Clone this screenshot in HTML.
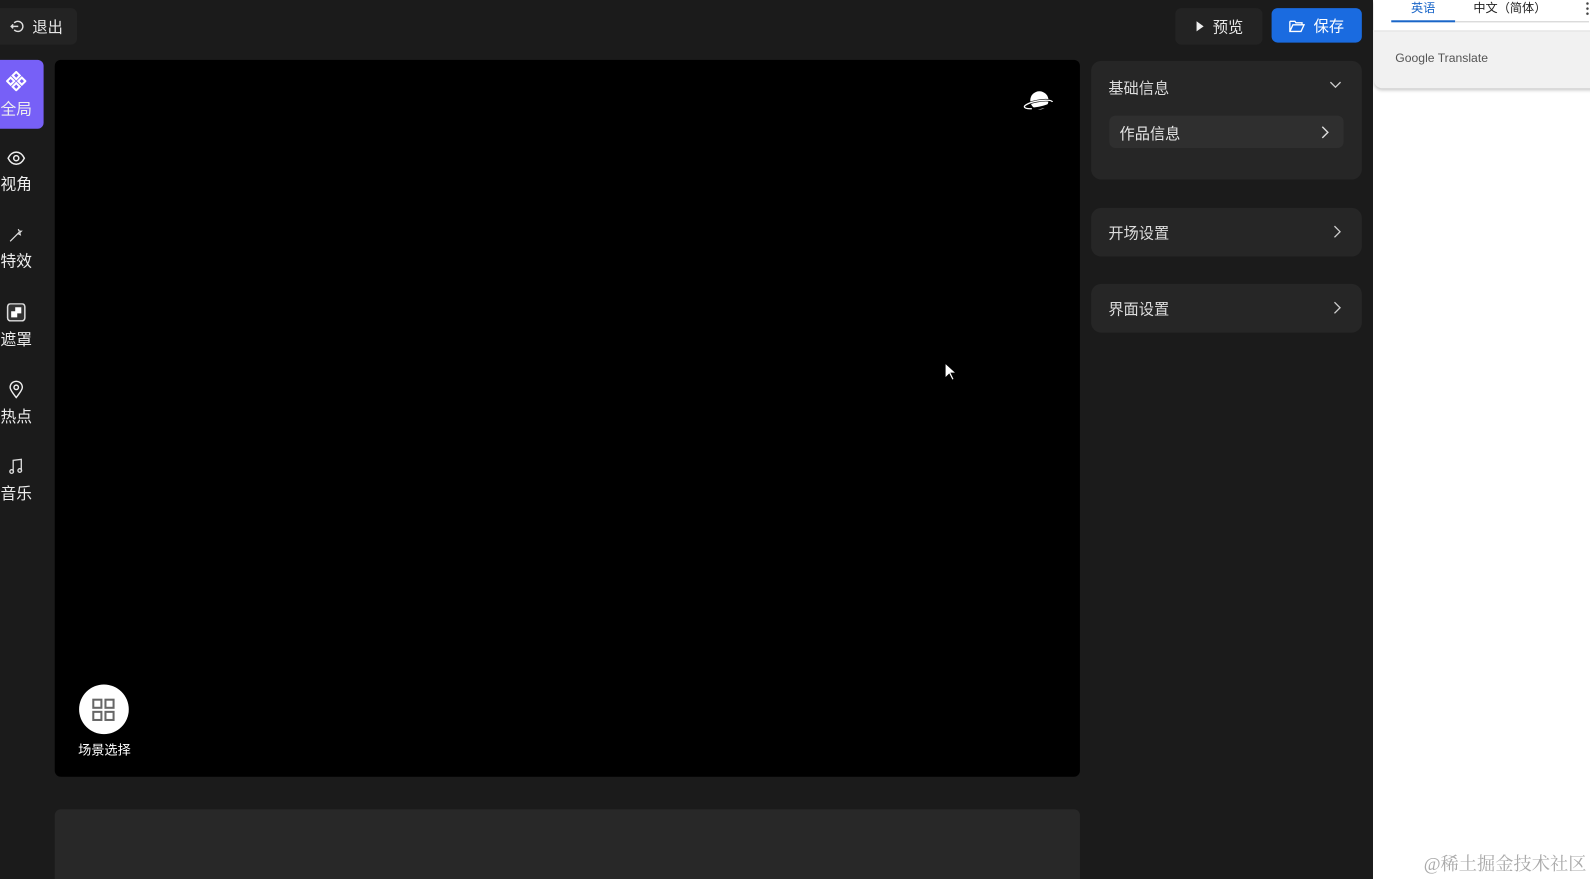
<!DOCTYPE html>
<html><head><meta charset="utf-8"><style>
*{margin:0;padding:0;box-sizing:border-box}
html,body{width:1590px;height:879px;overflow:hidden;background:#1b1b1b}
#w{width:1568px;height:867px;position:relative;transform:scale(1.01403);transform-origin:0 0;font-family:"Liberation Sans","Noto Sans CJK SC",sans-serif;color:#e8e8e8}
.a{position:absolute}
.btn{background:#232323;border-radius:6px;font-size:15px;display:flex;align-items:center;justify-content:center;gap:8px}
.side{position:absolute;left:0;width:32px;text-align:center;font-size:15.5px;color:#eee;line-height:18px}
.side svg{display:block;margin:0 auto 10px}
.card{position:absolute;left:1076px;width:267px;background:#262626;border-radius:10px;font-size:15px;color:#ddd}
.card .t{position:absolute;left:17px}
.chev{position:absolute;right:20px}
</style></head><body><div id="w">
<div class="a btn" style="left:-8px;top:8px;width:84px;height:36px;padding-left:4px">
<svg width="14" height="14" viewBox="0 0 14 14" fill="none" stroke="#ddd" stroke-width="1.4"><path d="M4 3.5A5 5 0 1 1 4 10.5"/><path d="M1 7h7M3 5L1 7l2 2"/></svg>退出</div>
<div class="a btn" style="left:1159px;top:8px;width:86px;height:36px"><svg width="10" height="12"><path d="M2 1l7 5-7 5z" fill="#eee"/></svg>预览</div>
<div class="a btn" style="left:1254px;top:8px;width:89px;height:34px;background:#1a6be0;color:#fff"><svg width="16" height="13" viewBox="0 0 16 13" fill="none" stroke="#fff" stroke-width="1.3"><path d="M1 2h5l1 1.5h6v2M1 2v10h11l3-6.5H4L1 12"/></svg>保存</div>

<div class="a" style="left:0;top:59px;width:43px;height:68px;background:#7760f7;border-radius:0 6px 6px 0"></div>
<div class="side" style="top:70px"><svg width="20" height="20" viewBox="0 0 20 20" fill="none" stroke="#fff" stroke-width="2"><rect x="7.5" y="2" width="5" height="5" transform="rotate(45 10 4.5)"/><rect x="2" y="7.5" width="5" height="5" transform="rotate(45 4.5 10)"/><rect x="13" y="7.5" width="5" height="5" transform="rotate(45 15.5 10)"/><rect x="7.5" y="13" width="5" height="5" transform="rotate(45 10 15.5)"/></svg>全局</div>
<div class="side" style="top:148px"><svg width="18" height="16" viewBox="0 0 18 16" fill="none" stroke="#eee" stroke-width="1.5"><path d="M1 8c2-4 5-6 8-6s6 2 8 6c-2 4-5 6-8 6S3 12 1 8z"/><circle cx="9" cy="8" r="2.5"/></svg>视角</div>
<div class="side" style="top:224px"><svg width="18" height="16" viewBox="0 0 18 16" fill="none" stroke="#ddd" stroke-width="1.2"><path d="M3 14L12 5M11 2l1 2 2 0-1.5 1.5.5 2-2-1"/></svg>特效</div>
<div class="side" style="top:299px"><svg width="20" height="18" viewBox="0 0 20 18" fill="none"><rect x="1.5" y="0.5" width="17" height="17" rx="3" stroke="#ddd" stroke-width="1.5" fill="#333"/><path d="M9 4h6v6H9zM5 8h6v6H5z" fill="#fff"/></svg>遮罩</div>
<div class="side" style="top:375px"><svg width="16" height="18" viewBox="0 0 16 18" fill="none" stroke="#eee" stroke-width="1.4"><path d="M8 17C4 12 2 9 2 7a6 6 0 0 1 12 0c0 2-2 5-6 10z"/><circle cx="8" cy="7" r="2.2"/></svg>热点</div>
<div class="side" style="top:451px"><svg width="16" height="18" viewBox="0 0 16 18" fill="none" stroke="#ddd" stroke-width="1.3"><path d="M5 14V3l8-1v11"/><circle cx="3.5" cy="14" r="1.8"/><circle cx="11.5" cy="13" r="1.8"/></svg>音乐</div>

<div class="a" style="left:54px;top:59px;width:1011px;height:707px;background:#000;border-radius:6px"></div>
<svg class="a" style="left:1008px;top:87px" width="32" height="26" viewBox="0 0 32 26"><circle cx="17" cy="12" r="9" fill="#fff"/><ellipse cx="16" cy="16" rx="14" ry="3.5" transform="rotate(-10 16 16)" fill="none" stroke="#000" stroke-width="2.5"/><ellipse cx="16" cy="16" rx="14" ry="3.5" transform="rotate(-10 16 16)" fill="none" stroke="#fff" stroke-width="1.3" stroke-dasharray="0 22 40"/></svg>
<div class="a" style="left:78px;top:675px;width:49px;height:49px;border-radius:50%;background:#fff"></div>
<svg class="a" style="left:90px;top:688px" width="24" height="24" viewBox="0 0 24 24" fill="none" stroke="#666" stroke-width="2"><rect x="2" y="2" width="8" height="8"/><rect x="14" y="2" width="8" height="8"/><rect x="2" y="14" width="8" height="8"/><rect x="14" y="14" width="8" height="8"/></svg>
<div class="a" style="left:72px;top:729px;width:62px;text-align:center;font-size:13px;color:#fff">场景选择</div>
<svg class="a" style="left:930px;top:357px" width="14" height="20"><path d="M2 1v15l4-4 3 6 2-1-3-6h5z" fill="#fff" stroke="#000" stroke-width="1"/></svg>
<div class="a" style="left:54px;top:798px;width:1011px;height:90px;background:#282828;border-radius:6px"></div>

<div class="card" style="top:60px;height:117px"><span class="t" style="top:16px">基础信息</span>
<svg class="chev" style="top:20px" width="12" height="8" viewBox="0 0 12 8" fill="none" stroke="#ccc" stroke-width="1.3"><path d="M1 1l5 5 5-5"/></svg>
<div class="a" style="left:18px;top:54px;width:231px;height:32px;background:#2f2f2f;border-radius:6px"><span class="a" style="left:10px;top:7px;color:#e6e6e6">作品信息</span>
<svg class="a" style="right:14px;top:10px" width="8" height="13" viewBox="0 0 8 13" fill="none" stroke="#ddd" stroke-width="1.4"><path d="M1 1l5.5 5.5L1 12"/></svg></div></div>
<div class="card" style="top:205px;height:48px"><span class="t" style="top:14px">开场设置</span><svg class="chev" style="top:17px" width="8" height="13" viewBox="0 0 8 13" fill="none" stroke="#ccc" stroke-width="1.3"><path d="M1 1l5.5 5.5L1 12"/></svg></div>
<div class="card" style="top:280px;height:48px"><span class="t" style="top:14px">界面设置</span><svg class="chev" style="top:17px" width="8" height="13" viewBox="0 0 8 13" fill="none" stroke="#ccc" stroke-width="1.3"><path d="M1 1l5.5 5.5L1 12"/></svg></div>

<div class="a" style="left:1354px;top:0;width:236px;height:879px;background:#fff"></div>
<div class="a" style="left:1355px;top:0;width:235px;height:87px;background:#f1f1f1;box-shadow:0 2px 3px rgba(0,0,0,.2);border-radius:0 0 0 8px"></div>
<div class="a" style="left:1355px;top:0;width:235px;height:31px;background:#fff;border-bottom:1px solid #ddd"></div>
<div class="a" style="left:1372px;top:0;width:63px;height:22px;border-bottom:2px solid #1a66c8;text-align:center;font-size:12px;color:#1a66c8;line-height:16px">英语</div>
<div class="a" style="left:1435px;top:21px;width:132px;height:1px;background:#ccc"></div>
<div class="a" style="left:1453px;top:0;font-size:12px;color:#222;line-height:16px">中文（简体）</div>
<div class="a" style="left:1564px;top:1px;width:3px;height:14px;background:radial-gradient(circle,#444 1px,transparent 1.5px) 0 0/3px 5px"></div>
<div class="a" style="left:1376px;top:50px;font-size:12px;color:#555">Google Translate</div>
<div class="a" style="left:1404px;top:838px;font-size:18px;color:#aaa;font-family:'Liberation Serif','Noto Serif CJK SC',serif">@稀土掘金技术社区</div>
</div></body></html>
